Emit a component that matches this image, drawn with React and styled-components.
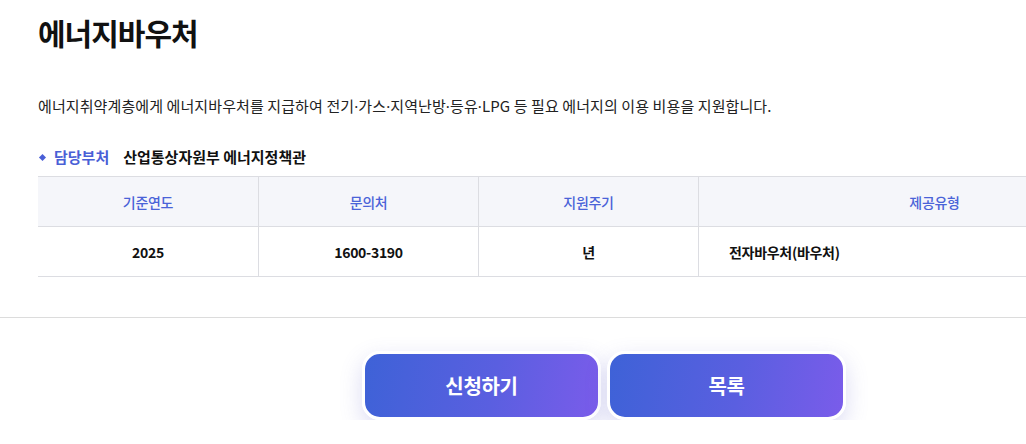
import React from 'react';
import styled, { createGlobalStyle } from 'styled-components';

const GlobalStyle = createGlobalStyle`
  html, body {
    margin: 0;
    padding: 0;
    background: #fff;
    overflow: hidden;
  }
  body {
    font-family: "Noto Sans CJK KR", "Noto Sans", sans-serif;
    color: #222;
  }
`;

const Page = styled.div`
  width: 1200px;
`;

const Content = styled.section`
  width: 1132px;
  margin-left: 38px;
  padding-top: 11px;
  padding-bottom: 40px;
`;

const Title = styled.h2`
  margin: 0;
  font-size: 30px;
  line-height: 42px;
  font-weight: 700;
  color: #111;
  letter-spacing: -1px;
`;

const Desc = styled.p`
  margin: 42px 0 0;
  height: 22px;
  font-size: 15px;
  line-height: 22px;
  color: #222;
  letter-spacing: 0.1px;
`;

// Latin middle dot is narrower than the CJK full-width one
const Dot = styled.span`
  font-family: "Noto Sans", sans-serif;
  line-height: 1;
`;

const InfoLine = styled.div`
  display: flex;
  align-items: center;
  gap: 14px;
  margin-top: 29px;
  font-size: 15px;
  line-height: 22px;
  font-weight: 700;
  letter-spacing: 0;
`;

const InfoLabel = styled.span`
  display: flex;
  align-items: center;
  gap: 9px;
  color: #4a5fd6;
  &::before {
    content: '';
    margin-left: 2px;
    width: 5px;
    height: 5px;
    background: #4a5fd6;
    transform: rotate(45deg);
  }
`;

const InfoValue = styled.span`
  color: #111;
`;

const Table = styled.div`
  margin-top: 8px;
  display: grid;
  grid-template-columns: 220px 220px 220px 1fr;
  border-top: 1px solid #dcdde2;
`;

const Cell = styled.div`
  height: 49px;
  display: flex;
  align-items: center;
  justify-content: ${p => (p.$left ? 'flex-start' : 'center')};
  padding-left: ${p => (p.$left ? '30px' : '0')};
  border-bottom: 1px solid #dcdde2;
  border-left: ${p => (p.$first ? 'none' : '1px solid #dcdde2')};
  font-size: 14px;
  letter-spacing: -0.3px;
  background: ${p => (p.$head ? '#f5f6fa' : '#fff')};
  color: ${p => (p.$head ? '#4a63d8' : '#111')};
  font-weight: ${p => (p.$head ? 500 : 700)};
`;

const Divider = styled.hr`
  margin: 0;
  border: none;
  border-top: 1px solid #dcdcdc;
`;

const ButtonRow = styled.div`
  width: 1132px;
  margin-left: 38px;
  padding-top: 33px;
  display: flex;
  justify-content: center;
  gap: 6px;
`;

const ActionButton = styled.button`
  width: 239px;
  height: 69px;
  border: 3px solid #fff;
  border-radius: 18px;
  background: linear-gradient(100deg, #3e62d7 0%, #5a5fe0 55%, #7a5cea 100%);
  color: #fff;
  font-family: inherit;
  font-size: 20px;
  font-weight: 700;
  letter-spacing: -0.3px;
  cursor: pointer;
  box-shadow: 0 8px 22px rgba(90, 90, 200, 0.22);
`;

const heads = ['기준연도', '문의처', '지원주기', '제공유형'];
const values = ['2025', '1600-3190', '년', '전자바우처(바우처)'];

export default function App() {
  return (
    <Page>
      <GlobalStyle />
      <Content>
        <Title>에너지바우처</Title>
        <Desc>
          에너지취약계층에게 에너지바우처를 지급하여 전기<Dot>·</Dot>가스<Dot>·</Dot>지역난방<Dot>·</Dot>등유<Dot>·</Dot>LPG 등 필요 에너지의 이용 비용을 지원합니다.
        </Desc>
        <InfoLine>
          <InfoLabel>담당부처</InfoLabel>
          <InfoValue>산업통상자원부 에너지정책관</InfoValue>
        </InfoLine>
        <Table>
          {heads.map((h, i) => (
            <Cell key={h} $head $first={i === 0}>{h}</Cell>
          ))}
          {values.map((v, i) => (
            <Cell key={v} $first={i === 0} $left={i === 3}>{v}</Cell>
          ))}
        </Table>
      </Content>
      <Divider />
      <ButtonRow>
        <ActionButton type="button">신청하기</ActionButton>
        <ActionButton type="button">목록</ActionButton>
      </ButtonRow>
    </Page>
  );
}
